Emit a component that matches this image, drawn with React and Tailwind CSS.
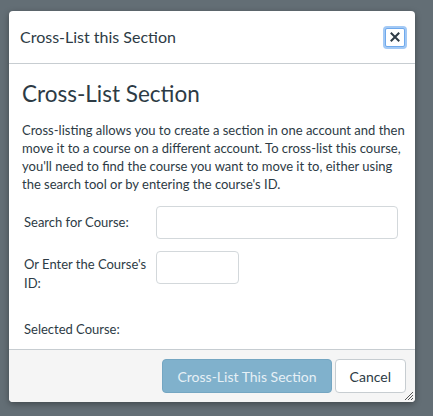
import React from "react";

function CloseButton() {
  return (
    <button
      type="button"
      aria-label="Close"
      className="flex h-[23px] w-[24px] items-center justify-center rounded-[4px] bg-[#a3c9f5] p-[2px]"
    >
      <span className="flex h-full w-full items-center justify-center rounded-[2px] border border-[#6fa9ec] bg-white">
        <svg width="10" height="10" viewBox="0 0 10 10" fill="none">
          <path d="M1.5 1.5 L8.5 8.5 M8.5 1.5 L1.5 8.5" stroke="#2d3b45" strokeWidth="2" strokeLinecap="square" />
        </svg>
      </span>
    </button>
  );
}

function FormRow({ label, labelPad, inputWidth }) {
  return (
    <div className="flex items-start">
      <label className={`w-[134px] shrink-0 pl-[2px] text-[13px] leading-[19px] ${labelPad}`}>{label}</label>
      <input
        type="text"
        className={`h-[33px] ${inputWidth} rounded-[4px] border border-[#d3d8db] bg-white outline-none`}
      />
    </div>
  );
}

export default function App() {
  return (
    <div
      className="h-[416px] w-[433px] bg-[#636e75] pl-[9px] pt-[11px] text-[#2d3b45]"
      style={{ fontFamily: "Lato, 'Liberation Sans', sans-serif" }}
    >
      <div className="relative flex h-[391px] w-[406px] flex-col overflow-hidden rounded-[4px] bg-white shadow-[0_2px_6px_rgba(0,0,0,0.35)]">
        {/* Header */}
        <div className="flex h-[53px] items-center justify-between border-b border-[#c7cdd1] pl-[11px] pr-[8px]">
          <h1 className="text-[16px] leading-[20px]">Cross-List this Section</h1>
          <CloseButton />
        </div>

        {/* Body */}
        <div className="flex-1 pl-[13px] pr-[2px] pt-[17px]">
          <h2 className="text-[22.5px] leading-[26px]">Cross-List Section</h2>
          <p className="mt-[14px] text-[13px] leading-[18px]">
            Cross-listing allows you to create a section in one account and then move it to a course on a
            different account. To cross-list this course, you'll need to find the course you want to move it to,
            either using the search tool or by entering the course's ID.
          </p>

          <div className="mt-[13px] flex flex-col gap-[12px]">
            <FormRow label="Search for Course:" labelPad="pt-[7px]" inputWidth="w-[242px]" />
            <FormRow label="Or Enter the Course's ID:" labelPad="pt-[4px]" inputWidth="w-[83px]" />
          </div>
          <div className="mt-[27px] pl-[2px] text-[13px] leading-[19px]">Selected Course:</div>
        </div>

        {/* Footer */}
        <div className="flex h-[53px] items-center justify-end gap-[3px] border-t border-[#c7cdd1] bg-[#f5f5f5] pr-[9px]">
          <button
            type="button"
            className="h-[34px] rounded-[4px] border border-[#74a6c2] bg-[#80b1cc] px-[14px] text-[14px] text-[#e6f0f6]"
          >
            Cross-List This Section
          </button>
          <button
            type="button"
            className="h-[34px] rounded-[4px] border border-[#c7cdd1] bg-white px-[14px] text-[14px] text-[#2d3b45]"
          >
            Cancel
          </button>
        </div>

        {/* Resize grip */}
        <svg className="absolute bottom-[1px] right-[1px]" width="11" height="11" viewBox="0 0 11 11">
          <path d="M10 2 L2 10 M10 5 L5 10 M10 8 L8 10" stroke="#555" strokeWidth="1" />
        </svg>
      </div>
    </div>
  );
}
